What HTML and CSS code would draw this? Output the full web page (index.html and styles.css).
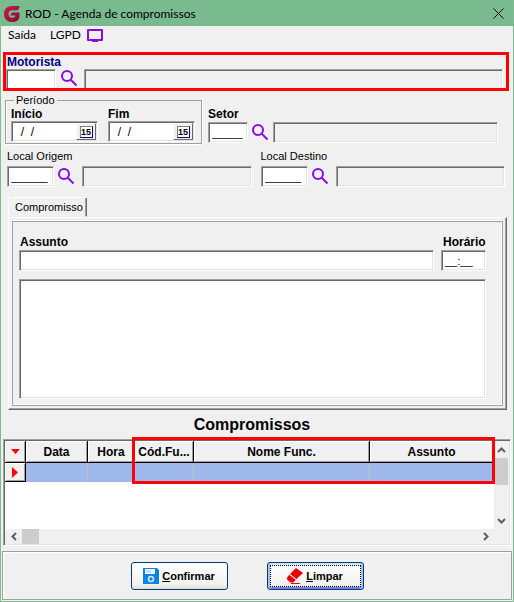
FILE: index.html
```html
<!DOCTYPE html>
<html lang="pt-BR">
<head>
<meta charset="UTF-8">
<title>ROD - Agenda de compromissos</title>
<link rel="stylesheet" href="styles.css">
</head>
<body>
<svg width="0" height="0" class="defs">
    <symbol id="lupa" viewBox="0 0 17 17">
        <circle cx="6" cy="6" r="5" fill="none" stroke="#8a0be0" stroke-width="2"/>
        <path d="M9.5 9.5L15.5 15.5" stroke="#8a0be0" stroke-width="2"/>
    </symbol>
</svg>
<div class="janela">
    <header class="titulo">
        <svg class="logo" width="16" height="16" viewBox="0 0 16 16">
            <defs>
                <linearGradient id="grad" x1="0" y1="0" x2="1" y2="1">
                    <stop offset="0" stop-color="#d0164f"/>
                    <stop offset="1" stop-color="#7c1238"/>
                </linearGradient>
            </defs>
            <path d="M15.500 0H8C3 0 0 3.500 0 8s3 8 8 8c4.500 0 7-2 7.500-5V6.500H8L6 9.500h5.500c-.5 1.500-1.500 2.300-3.500 2.300-2.200 0-3.500-1.500-3.500-3.800S6 4.200 8 4.200h5.500c1.500-1 2-2.500 2-4.200z" fill="url(#grad)"/>
        </svg>
        <h1>ROD - Agenda de compromissos</h1>
        <button class="fechar" aria-label="Fechar">
            <svg width="11" height="11" viewBox="0 0 11 11"><path d="M.5 .5l10 10M10.500 .5l-10 10" stroke="#000" fill="none"/></svg>
        </button>
    </header>
    <nav class="menu">
        <a href="#">Saída</a>
        <a href="#">LGPD</a>
        <a href="#" aria-label="Monitor">
            <svg width="16" height="13" viewBox="0 0 16 13"><path d="M1 1h14v10H1z" fill="none" stroke="#8a0be0" stroke-width="2" stroke-linejoin="round"/><path d="M5 11h6v2H5z" fill="#8a0be0"/></svg>
        </a>
    </nav>

    <section class="motorista">
        <label for="motorista">Motorista</label>
        <div class="linha">
            <input type="text" id="motorista" class="campo">
            <button class="busca" aria-label="Buscar motorista"><svg width="17" height="17"><use href="#lupa"/></svg></button>
            <input type="text" class="campo nome" aria-label="Nome do motorista" readonly>
        </div>
    </section>

    <section class="filtros">
        <fieldset class="periodo">
            <legend>Período</legend>
            <div>
                <label for="inicio">Início</label>
                <div class="data">
                    <input type="text" id="inicio" value="  /  /">
                    <button aria-label="Calendário"><span>15</span></button>
                </div>
            </div>
            <div>
                <label for="fim">Fim</label>
                <div class="data">
                    <input type="text" id="fim" value="  /  /">
                    <button aria-label="Calendário"><span>15</span></button>
                </div>
            </div>
        </fieldset>
        <div class="setor">
            <label for="setor">Setor</label>
            <div class="linha">
                <input type="text" id="setor" class="campo" value="_____">
                <button class="busca" aria-label="Buscar setor"><svg width="17" height="17"><use href="#lupa"/></svg></button>
                <input type="text" class="campo nome" aria-label="Nome do setor" readonly>
            </div>
        </div>
    </section>

    <section class="locais">
        <div>
            <label for="origem">Local Origem</label>
            <div class="linha">
                <input type="text" id="origem" class="campo" value="______">
                <button class="busca" aria-label="Buscar origem"><svg width="17" height="17"><use href="#lupa"/></svg></button>
                <input type="text" class="campo nome" aria-label="Nome da origem" readonly>
            </div>
        </div>
        <div>
            <label for="destino">Local Destino</label>
            <div class="linha">
                <input type="text" id="destino" class="campo" value="______">
                <button class="busca" aria-label="Buscar destino"><svg width="17" height="17"><use href="#lupa"/></svg></button>
                <input type="text" class="campo nome" aria-label="Nome do destino" readonly>
            </div>
        </div>
    </section>

    <section class="abas">
        <button class="aba" role="tab" aria-selected="true">Compromisso</button>
        <div class="painel">
            <div class="interno">
                <div class="assunto">
                    <label for="assunto">Assunto</label>
                    <label for="horario">Horário</label>
                    <input type="text" id="assunto" class="campo">
                    <input type="text" id="horario" class="campo" value="__:__">
                </div>
                <textarea class="campo" aria-label="Descrição"></textarea>
            </div>
        </div>
    </section>

    <h2>Compromissos</h2>
    <div class="grade">
        <div class="dados">
            <table>
                <colgroup>
                    <col class="c-ind"><col class="c-data"><col class="c-hora"><col class="c-cod"><col class="c-nome"><col>
                </colgroup>
                <thead>
                    <tr>
                        <th><svg width="9" height="5" viewBox="0 0 9 5"><path d="M0 0h9L4.500 5z" fill="#f00"/></svg></th>
                        <th>Data</th>
                        <th>Hora</th>
                        <th>Cód.Fu...</th>
                        <th>Nome Func.</th>
                        <th>Assunto</th>
                    </tr>
                </thead>
                <tbody>
                    <tr>
                        <th><svg width="6" height="11" viewBox="0 0 6 11"><path d="M0 0l6 5.500L0 11z" fill="#f00"/></svg></th>
                        <td></td>
                        <td></td>
                        <td></td>
                        <td></td>
                        <td></td>
                    </tr>
                </tbody>
            </table>
            <div class="destaque"></div>
        </div>
        <div class="rolagem vertical">
            <button aria-label="Acima"><svg width="9" height="6" viewBox="0 0 9 6"><path d="M1 5l3.500-3.500L8 5" fill="none" stroke="#606060" stroke-width="2"/></svg></button>
            <div class="polegar"></div>
            <button aria-label="Abaixo"><svg width="9" height="6" viewBox="0 0 9 6"><path d="M1 1l3.500 3.500L8 1" fill="none" stroke="#606060" stroke-width="2"/></svg></button>
        </div>
        <div class="rolagem horizontal">
            <button aria-label="Esquerda"><svg width="6" height="9" viewBox="0 0 6 9"><path d="M5 1L1.500 4.500 5 8" fill="none" stroke="#606060" stroke-width="2"/></svg></button>
            <div class="polegar"></div>
            <button aria-label="Direita"><svg width="6" height="9" viewBox="0 0 6 9"><path d="M1 1l3.500 3.500L1 8" fill="none" stroke="#606060" stroke-width="2"/></svg></button>
        </div>
    </div>

    <footer class="rodape">
        <button class="acao">
            <svg width="16" height="16" viewBox="0 0 16 16">
                <path d="M0 0h14l2 2v14H0z" fill="#0a84e4"/>
                <path d="M2 1h10v5H2z" fill="#fff"/>
                <path d="M3 2h5v3H3z" fill="#bfe0fa"/>
                <circle cx="8" cy="11" r="2.500" fill="none" stroke="#d4ebfc" stroke-width="1.500"/>
            </svg>
            <span><u>C</u>onfirmar</span>
        </button>
        <button class="acao foco">
            <svg width="16" height="16" viewBox="0 0 16 16">
                <path d="M9 0l7 5-6.500 6L3 6z" fill="#ea0000"/>
                <path d="M2.300 6.800l6.400 5-2.400 2.700H3.500L0 11.500V9.500z" fill="#ea0000"/>
                <path d="M4 15.500h9" stroke="#ea0000"/>
            </svg>
            <span><u>L</u>impar</span>
        </button>
    </footer>
</div>
</body>
</html>
```

FILE: styles.css
```css
* {
    box-sizing: border-box;
}
body {
    margin: 0;
    background-color: #f0f0f0;
    color: #000;
    font: 11px/14px 'Liberation Sans', Arial, sans-serif;
}
input, button, textarea {
    margin: 0;
    padding: 0;
    font: inherit;
    color: inherit;
    border-radius: 0;
    outline: none;
}
button {
    border: none;
    background: none;
}
svg {
    display: block;
    flex: none;
}
label {
    display: block;
    font-size: 12px;
    font-weight: bold;
}
.defs {
    position: absolute;
}
.janela {
    border: 1px solid #7dbb91;
    background-color: #f0f0f0;
}

/* barra de título e menu */
.titulo {
    display: flex;
    align-items: center;
    height: 25px;
    padding: 0 4px 0 3px;
    background-color: #79ba8f;
}
.titulo h1 {
    flex: 1;
    margin: 0 0 0 5px;
    font: 12px/16px Lato, 'Open Sans', sans-serif;
}
.fechar {
    padding: 5px;
}
.menu {
    display: flex;
    align-items: center;
    gap: 14px;
    height: 18px;
    margin-bottom: 8px;
    padding: 0 7px;
    font: 12px/16px Lato, 'Open Sans', sans-serif;
}
.menu a {
    color: #000;
    text-decoration: none;
}
.menu a:last-child {
    margin-left: -8px;
}

/* campos */
.campo, .data {
    height: 21px;
    border: 1px solid;
    border-color: #a0a0a0 #fff #fff #a0a0a0;
    background-color: #fff;
    box-shadow: inset 1px 1px #696969, inset -1px -1px #e3e3e3;
}
.campo {
    min-width: 0;
    padding: 0 3px;
}
.nome {
    flex: 1;
    background-color: #f0f0f0;
}
.linha {
    display: flex;
    align-items: center;
}
.busca {
    margin: 0 7px 0 4px;
}

.motorista {
    height: 39px;
    margin: 0 4px 0 2px;
    border: 3px solid #f00;
    padding-right: 3px;
}
.motorista label {
    padding-left: 1px;
    line-height: 14px;
    color: #000080;
}
.motorista .campo {
    height: 19px;
    border-bottom: none;
    box-shadow: inset 1px 1px #696969, inset -1px 0 #e3e3e3;
}
#motorista {
    width: 50px;
}
.motorista .busca {
    margin: 0 6px 0 5px;
}

.filtros {
    display: flex;
    gap: 6px;
    margin: 3px 15px 0 4px;
}
.periodo {
    display: flex;
    gap: 10px;
    width: 197px;
    height: 50px;
    margin: 0;
    border: 1px solid #a0a0a0;
    box-shadow: inset 1px 0 #fff, 0 1px #fff, 1px 0 #fff;
    padding: 0 5px;
}
.periodo legend {
    margin-left: 3px;
    padding: 0 2px;
    line-height: 13px;
}
.data {
    display: flex;
    width: 87px;
}
.data input {
    flex: 1;
    min-width: 0;
    margin: 1px 0 1px 1px;
    border: none;
    padding-left: 1px;
    font-size: 12px;
    background: none;
}
.data button {
    width: 20px;
    margin: 1px;
    border: 1px solid;
    border-color: #fff #696969 #696969 #fff;
    background-color: #f0f0f0;
}
.data span {
    display: block;
    width: 13px;
    margin: 0 auto;
    border: 1px solid;
    border-color: #808080 #000080 #000080 #808080;
    font: bold 9px/10px 'Liberation Sans', sans-serif;
    background-color: #fff;
}
.setor {
    flex: 1;
    padding-top: 13px;
}
.setor .linha {
    padding-top: 1px;
}
#setor {
    width: 40px;
}
.setor .busca {
    margin-right: 4px;
}

.locais {
    display: grid;
    grid-template-columns: 1fr 1fr;
    gap: 9px;
    margin: 5px 8px 0 6px;
}
.locais label {
    margin-bottom: 3px;
    font-size: 11px;
    font-weight: normal;
}
#origem, #destino {
    width: 47px;
}

/* aba */
.abas {
    margin: 10px 6px 0 7px;
}
.aba {
    display: block;
    height: 20px;
    border: 1px solid;
    border-color: #fff #696969 transparent #fff;
    border-radius: 2px 2px 0 0;
    padding: 0 3px 0 6px;
    box-shadow: inset -1px 0 #a0a0a0;
}
.painel {
    border: 1px solid;
    border-color: #fff #696969 #696969 #fff;
    padding: 3px;
    box-shadow: inset -1px -1px #a0a0a0;
}
.interno {
    border: 1px solid #a0a0a0;
    box-shadow: inset -1px -1px #fff, -1px -1px #fff;
    padding: 13px 16px 6px 6px;
}
.assunto {
    display: grid;
    grid-template-columns: 1fr 45px;
    column-gap: 7px;
}
.assunto label {
    margin: 0 0 1px 1px;
}
.assunto label + label {
    margin-left: 2px;
}
textarea.campo {
    display: block;
    width: 100%;
    height: 120px;
    margin-top: 8px;
    resize: none;
}

/* grade de compromissos */
h2 {
    margin: 5px 10px 4px 0;
    font-size: 16px;
    line-height: 20px;
    text-align: center;
}
.grade {
    display: grid;
    grid-template: 88px 15px / 1fr 15px;
    margin: 0 2px;
    border: 1px solid;
    border-color: #a0a0a0 #fff #fff #a0a0a0;
    padding: 1px;
    box-shadow: inset 1px 1px #696969, inset -1px -1px #e3e3e3;
}
.dados {
    position: relative;
    background-color: #fff;
}
table {
    width: 100%;
    border-collapse: separate;
    border-spacing: 0;
    table-layout: fixed;
}
th, td {
    height: 19px;
    padding: 0;
    border-right: 1px solid #c0c0c0;
}
th {
    height: 22px;
    border-right: 1px solid #000;
    border-bottom: 1px solid #000;
    background-color: #f0f0f0;
    box-shadow: inset 1px 1px #fff, inset -1px -1px #a0a0a0;
    font-size: 12px;
    white-space: nowrap;
}
tbody th {
    height: 19px;
}
td {
    background-color: #9eb8ec;
}
th svg {
    margin: 0 auto;
}
.c-ind { width: 21px; }
.c-data { width: 62px; }
.c-hora { width: 47px; }
.c-cod { width: 59px; }
.c-nome { width: 176px; }
.destaque {
    position: absolute;
    top: -4px;
    right: -1px;
    left: 127px;
    height: 47px;
    border: 3px solid #f00;
}
.rolagem {
    display: flex;
    align-items: center;
    background-color: #f0f0f0;
}
.rolagem button {
    display: flex;
    align-items: center;
    justify-content: center;
    width: 17px;
    height: 17px;
}
.polegar {
    background-color: #cdcdcd;
}
.vertical {
    flex-direction: column;
}
.vertical .polegar {
    width: 13px;
    height: 27px;
    margin-bottom: auto;
}
.horizontal .polegar {
    width: 17px;
    height: 15px;
    margin-right: auto;
}

/* botões */
.rodape {
    display: flex;
    justify-content: center;
    gap: 39px;
    margin: 5px 1px 1px;
    border: 1px solid #a0a0a0;
    box-shadow: inset 1px 1px #fff;
    padding: 10px 20px 9px 0;
}
.acao {
    display: flex;
    align-items: center;
    justify-content: center;
    gap: 3px;
    width: 97px;
    height: 28px;
    border: 1px solid #003c74;
    border-radius: 3px;
    background: linear-gradient(#fff, #f4f2ee 80%, #e2dfda);
    font-weight: bold;
}
.foco {
    position: relative;
    box-shadow: inset 2px 0 #a3c0f5, inset -2px 0 #a3c0f5, inset 0 2px #cee7ff, inset 0 -2px #6982ee;
}
.foco::after {
    content: "";
    position: absolute;
    inset: 2px;
    border: 1px dotted #000;
}
```
